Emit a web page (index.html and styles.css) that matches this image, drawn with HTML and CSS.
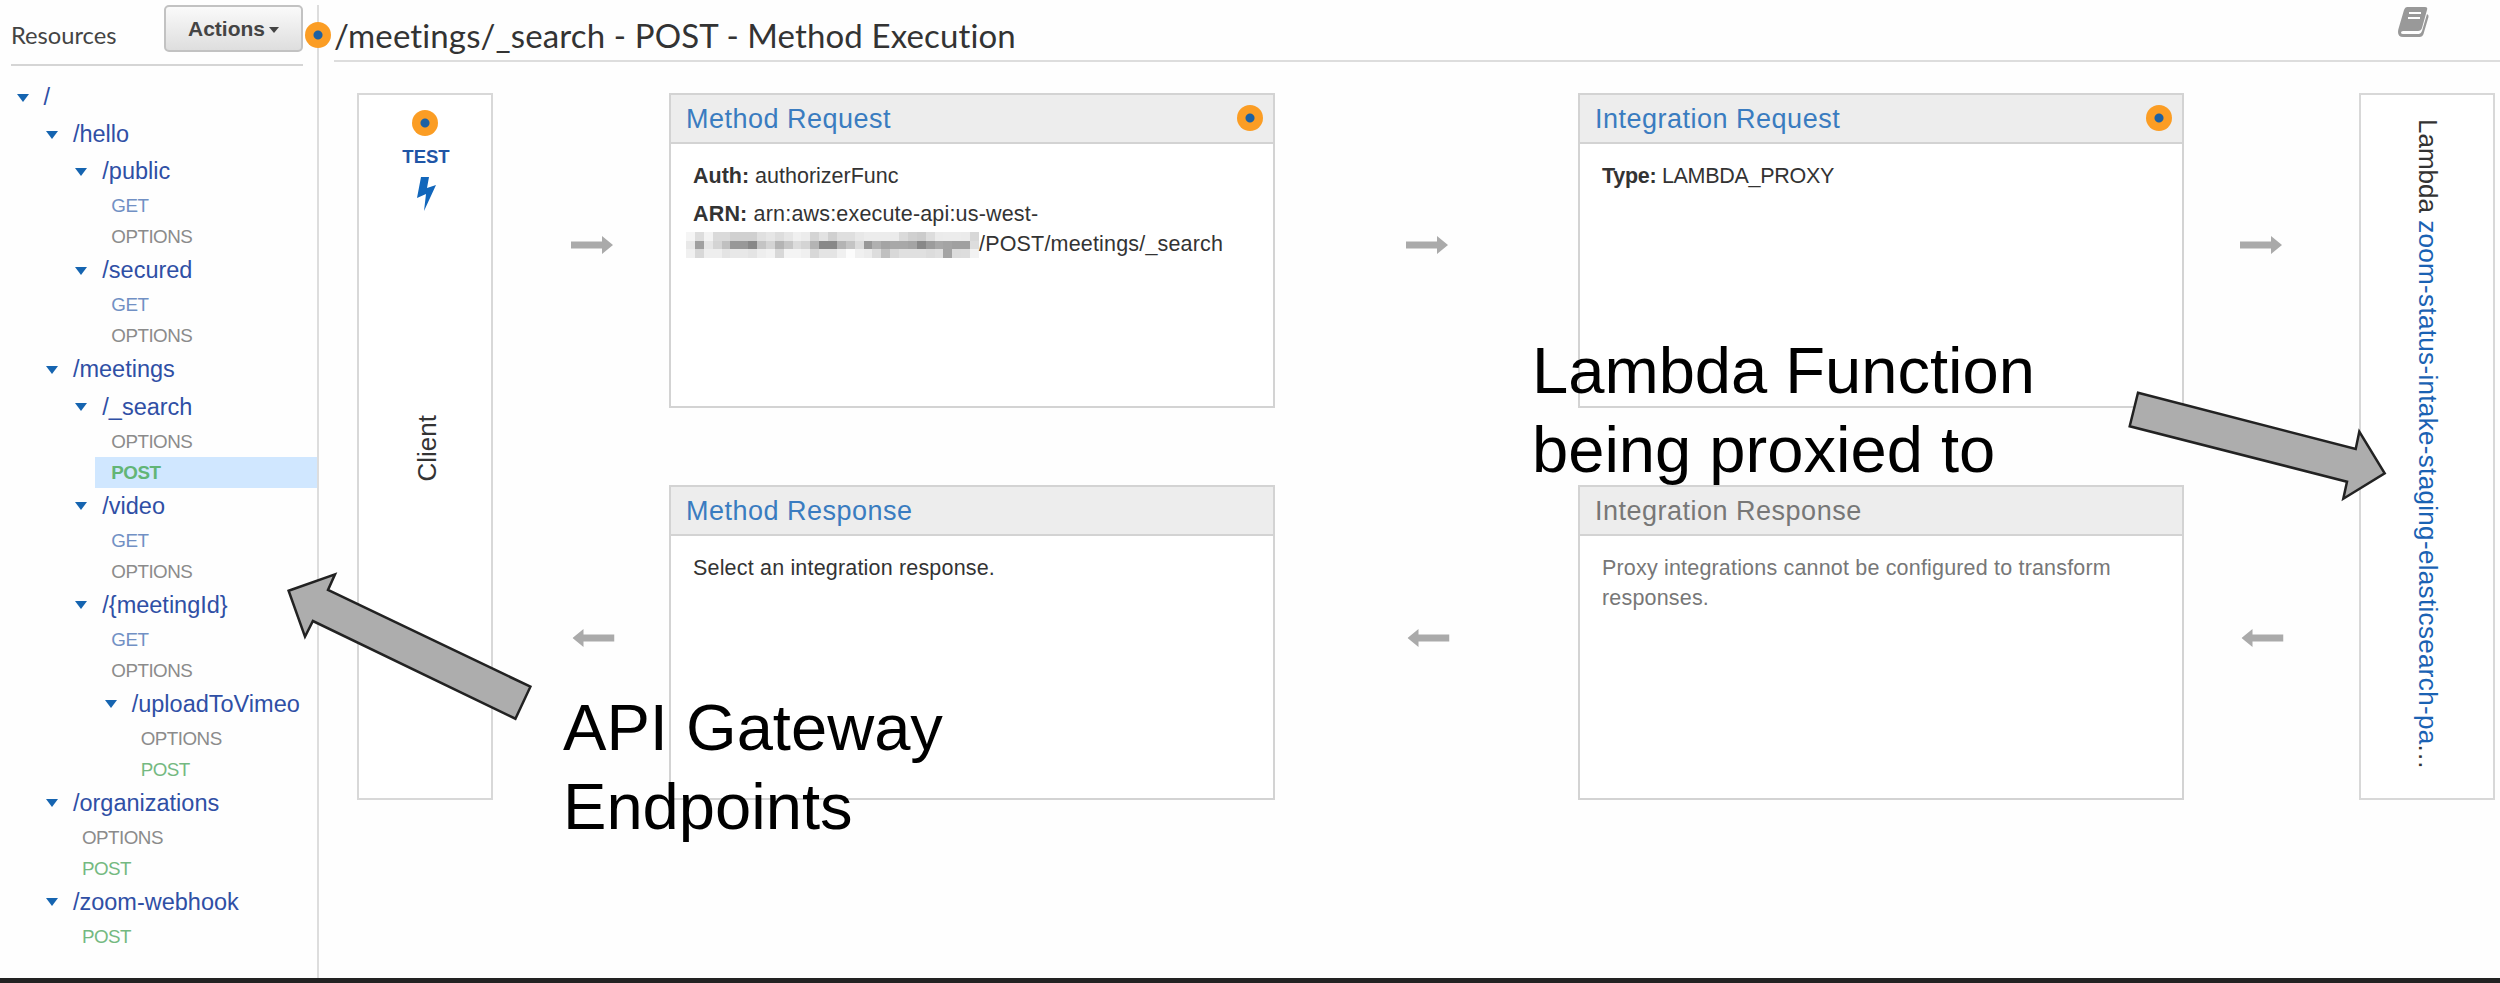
FILE: index.html
```html
<!DOCTYPE html>
<html>
<head>
    <meta charset="UTF-8">
    <title>Method Execution</title>
    <link rel="stylesheet" href="styles.css">
</head>
<body>
    <div class="app">
        <div class="side">
            <div class="side-head">
                <span class="side-title">Resources</span>
                <button class="actions">Actions<i class="caret"></i></button>
            </div>
            <ul class="tree">
                <li><a class="res">/</a>
                <ul>
                    <li><a class="res">/hello</a>
                    <ul>
                        <li><a class="res">/public</a>
                            <a class="m get">GET</a>
                            <a class="m">OPTIONS</a>
                        </li>
                        <li><a class="res">/secured</a>
                            <a class="m get">GET</a>
                            <a class="m">OPTIONS</a>
                        </li>
                    </ul>
                    </li>
                    <li><a class="res">/meetings</a>
                    <ul>
                        <li><a class="res">/_search</a>
                            <a class="m">OPTIONS</a>
                            <a class="m post sel">POST</a>
                        </li>
                        <li><a class="res">/video</a>
                            <a class="m get">GET</a>
                            <a class="m">OPTIONS</a>
                        </li>
                        <li><a class="res">/{meetingId}</a>
                            <a class="m get">GET</a>
                            <a class="m">OPTIONS</a>
                            <ul>
                                <li><a class="res">/uploadToVimeo</a>
                                    <a class="m">OPTIONS</a>
                                    <a class="m post">POST</a>
                                </li>
                            </ul>
                        </li>
                    </ul>
                    </li>
                    <li><a class="res">/organizations</a>
                        <a class="m">OPTIONS</a>
                        <a class="m post">POST</a>
                    </li>
                    <li><a class="res">/zoom-webhook</a>
                        <a class="m post">POST</a>
                    </li>
                </ul>
                </li>
            </ul>
            <i class="dot side-dot"></i>
        </div>
        <div class="main">
            <div class="head">
                <h1>/meetings/_search - POST - Method Execution</h1>
                <svg class="book" viewBox="0 0 32 30">
                    <path d="M9 0h18q3 0 2 3l-5 18q-1 3-4 3H5q-2 0-2 1.500t2 1.500h16q2 0 3-3l5-17q2 1 1.500 3l-5 17q-1 3-4 3H5q-5 0-5-5 0-2 1-5L6 3q1-3 3-3z" fill="#999"/>
                    <path d="M11 6h12M10 11h12" stroke="#fff" stroke-width="2"/>
                </svg>
            </div>
            <div class="flow">
                <div class="end">
                    <i class="dot"></i>
                    <span class="test">TEST</span>
                    <svg class="bolt" viewBox="0 0 19 34"><path d="M4 0h8l-2 11 9-3L7 34l2-17-9 4z" fill="#1166bb"/></svg>
                    <span class="client">Client</span>
                </div>
                <div class="arrows">
                    <svg class="arr" viewBox="0 0 42 18"><path d="M0 5.500h31V0l11 9-11 9v-5.500H0z"/></svg>
                    <svg class="arr back" viewBox="0 0 42 18"><path d="M0 5.500h31V0l11 9-11 9v-5.500H0z"/></svg>
                </div>
                <div class="col">
                    <div class="card">
                        <h2>Method Request<i class="dot"></i></h2>
                        <p class="auth"><b>Auth:</b> authorizerFunc</p>
                        <p><b>ARN:</b> arn:aws:execute-api:us-west-<br><span id="mask" class="mask"></span>/POST/meetings/_search</p>
                    </div>
                    <div class="card">
                        <h2>Method Response</h2>
                        <p>Select an integration response.</p>
                    </div>
                </div>
                <div class="arrows wide">
                    <svg class="arr" viewBox="0 0 42 18"><path d="M0 5.500h31V0l11 9-11 9v-5.500H0z"/></svg>
                    <svg class="arr back" viewBox="0 0 42 18"><path d="M0 5.500h31V0l11 9-11 9v-5.500H0z"/></svg>
                </div>
                <div class="col">
                    <div class="card">
                        <h2>Integration Request<i class="dot"></i></h2>
                        <p class="type"><b>Type:</b> LAMBDA_PROXY</p>
                    </div>
                    <div class="card off">
                        <h2>Integration Response</h2>
                        <p>Proxy integrations cannot be configured to transform<br>responses.</p>
                    </div>
                </div>
                <div class="arrows last">
                    <svg class="arr" viewBox="0 0 42 18"><path d="M0 5.500h31V0l11 9-11 9v-5.500H0z"/></svg>
                    <svg class="arr back" viewBox="0 0 42 18"><path d="M0 5.500h31V0l11 9-11 9v-5.500H0z"/></svg>
                </div>
                <div class="end">
                    <span class="lambda">Lambda <a>zoom-status-intake-staging-elasticsearch-pa</a><span class="more">...</span></span>
                </div>
            </div>
        </div>
    </div>

    <!-- annotations -->
    <svg class="notes" viewBox="0 0 2500 983">
        <path d="M288.600 590.700L335 574.300l-7 15.700 202.400 96.700-15 32L312.900 621l-7.900 15.700z"/>
        <path d="M2138 392.700L2355.700 449l3.600-17.300 25.400 41.600-41.400 25.400 3.700-17-217.300-55.400z"/>
    </svg>
    <div class="note note-api">API Gateway<br>Endpoints</div>
    <div class="note note-lambda">Lambda Function<br>being proxied to</div>

    <script>
        // pixelated account id, one hex grey per cell, 33 cells a row
        var rows = [
            'f5ddf3dadad0d0d0e0e6dde6f0ecd4e2d0dfdfe8ecececebdad0ccddebececebd8',
            'e8a0e6d4c0989888c4d4b4c6dcd4b48888b4c4dc98b0a4a8a8a4889ca8a4a0a0dd',
            'f0d8eeeee4e8e8e4eef2d8f4f4f0d8e4e4f0fcf0ecddc0d8e0e0e0dce0a4dcddf2'
        ];
        var mask = document.getElementById('mask');
        rows.join('').match(/../g).forEach(function (g) {
            var c = document.createElement('i');
            c.style.background = '#' + g + g + g;
            mask.appendChild(c);
        });
    </script>
</body>
</html>
```

FILE: styles.css
```css
* {
    box-sizing: border-box;
}

body {
    margin: 0;
    width: 2500px;
    height: 983px;
    overflow: hidden;
    position: relative;
    background: #fefefe;
    border-bottom: 5px solid #222;
    font-family: "Liberation Sans", Arial, sans-serif;
    color: #333;
}

.app {
    display: flex;
    height: 978px;
    padding-top: 5px;
}

/* sidebar */
.side {
    position: relative;
    width: 320px;
    border-right: 2px solid #ddd;
}

.side-head {
    display: flex;
    justify-content: space-between;
    height: 61px;
    width: 292px;
    margin-left: 11px;
    border-bottom: 2px solid #d5d5d5;
}

.side-title {
    font: 23.700px/60px Lato, sans-serif;
    color: #444;
}

.actions {
    width: 139px;
    height: 47px;
    padding: 0;
    border: 2px solid #c2c2c2;
    border-radius: 5px;
    background: linear-gradient(#fafafa, #dedede);
    font: bold 21px "Liberation Sans", sans-serif;
    color: #444;
}

.caret {
    display: inline-block;
    border: 5px solid transparent;
    border-top: 6px solid #444;
    border-bottom: 0;
    margin: 0 0 3px 4px;
}

.tree, .tree ul {
    list-style: none;
    margin: 0;
    padding: 0;
}

.tree {
    padding: 13px 0 0 16.500px;
}

.tree ul {
    padding-left: 29.400px;
}

.res {
    display: flex;
    align-items: center;
    height: 37.150px;
    font-size: 23.500px;
    color: #2f4fa5;
    white-space: nowrap;
}

.res::before {
    content: "";
    border: 6px solid transparent;
    border-top: 8px solid #1564b0;
    border-bottom: 0;
    margin-right: 15px;
}

.m {
    display: block;
    height: 30.960px;
    line-height: 31px;
    margin-left: 20px;
    padding-left: 16px;
    font-size: 18.800px;
    letter-spacing: -.5px;
    color: #8b8b8b;
}

.get {
    color: #7190c4;
}

.post {
    color: #74b981;
}

.sel {
    background: #d0e7ff;
    font-weight: bold;
    color: #62b576;
}

.dot {
    display: block;
    width: 26px;
    height: 26px;
    border-radius: 50%;
    background: radial-gradient(#1c61a3 0 4px, #fb9d24 5px);
}

.side-dot {
    position: absolute;
    top: 17px;
    right: -14px;
}

/* main */
.main {
    flex: 1;
    padding-left: 15px;
}

.head {
    display: flex;
    justify-content: space-between;
    height: 57px;
    border-bottom: 2px solid #ddd;
}

h1 {
    margin: 0;
    font: 33px/60px Lato, sans-serif;
    font-variant-ligatures: none;
    letter-spacing: .120px;
}

.book {
    width: 32px;
    height: 30px;
    margin: 2px 70px 0 0;
}

.flow {
    display: flex;
    height: 707px;
    margin: 31px 5px 0 23px;
}

.end {
    display: flex;
    flex-direction: column;
    align-items: center;
    width: 136px;
    border: 2px solid #d8d8d8;
    background: #fff;
}

.end .dot {
    margin-top: 15px;
}

.test {
    margin: 10px 0 10px 2px;
    font: bold 18.500px/21px "Liberation Sans", sans-serif;
    color: #1f55a6;
}

.bolt {
    width: 19px;
    height: 34px;
    margin-left: 2px;
}

.client {
    writing-mode: vertical-rl;
    transform: rotate(180deg);
    margin: 204px 0 0 4px;
    font-size: 26px;
}

.lambda {
    writing-mode: vertical-rl;
    margin-top: 24px;
    font-size: 26px;
    white-space: nowrap;
}

.lambda a {
    color: #1a62b3;
    letter-spacing: .330px;
}

.more {
    letter-spacing: 1.200px;
}

.arrows {
    display: flex;
    flex-direction: column;
    align-items: center;
    gap: 374px;
    width: 176px;
    padding: 143px 0 0 22px;
}

.wide {
    width: 303px;
    padding-left: 0;
}

.last {
    width: 175px;
    padding: 143px 22px 0 0;
}

.arr {
    width: 42px;
    height: 18px;
    fill: #aaa;
}

.back {
    transform: translate(1.500px, 1px) scaleX(-1);
}

.col {
    display: flex;
    flex-direction: column;
    justify-content: space-between;
    width: 606px;
}

.card {
    height: 315px;
    border: 2px solid #d3d3d3;
    background: #fff;
}

h2 {
    display: flex;
    align-items: center;
    justify-content: space-between;
    height: 49px;
    margin: 0 0 18px;
    padding: 1px 10px 0 15px;
    background: #ededed;
    border-bottom: 2px solid #d3d3d3;
    font-size: 27px;
    font-weight: normal;
    letter-spacing: .500px;
    color: #3a7cc0;
}

h2 .dot {
    margin-top: -3px;
}

.card p {
    margin: 0 0 8.500px 22px;
    font-size: 21.500px;
    line-height: 29.700px;
    letter-spacing: .180px;
}

.card .auth {
    letter-spacing: 0;
}

.card .type {
    letter-spacing: -.300px;
}

.off h2, .off p {
    color: #777;
}

.mask {
    display: inline-grid;
    grid-template-columns: repeat(33, 1fr);
    width: 293px;
    height: 26px;
    margin: 2px 0 0 -7px;
    vertical-align: top;
}

/* annotations */
.notes {
    position: absolute;
    inset: 0;
    fill: #adadad;
    stroke: #222;
    stroke-width: 2.500px;
}

.note {
    position: absolute;
    font-size: 65.100px;
    line-height: 79px;
    color: #000;
}

.note-api {
    left: 563px;
    top: 688px;
}

.note-lambda {
    left: 1532px;
    top: 331px;
}
```
